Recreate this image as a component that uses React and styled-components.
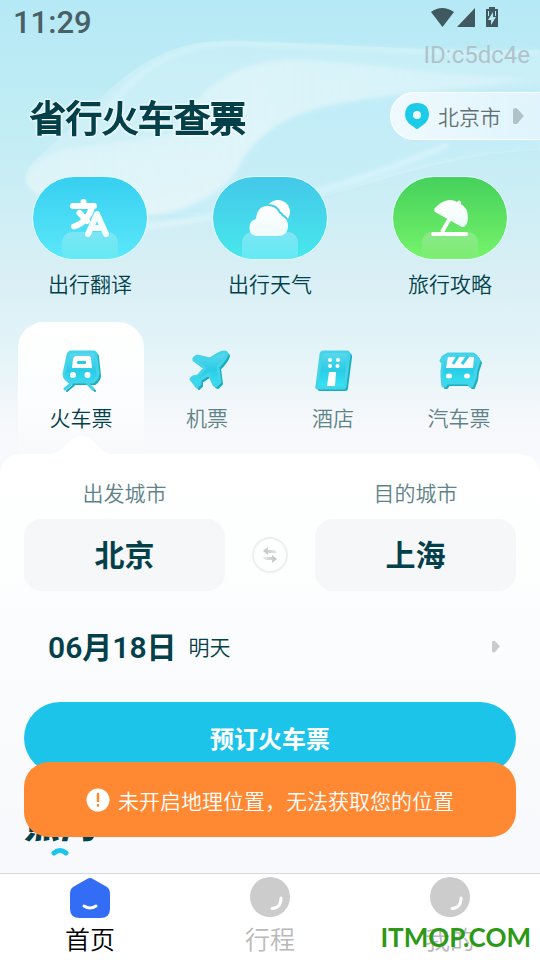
import React from "react";
import styled, { createGlobalStyle } from "styled-components";

const GlobalStyle = createGlobalStyle`
  * { box-sizing: border-box; }
  body {
    margin: 0;
    background: #f7f9fc;
    color: #04404a;
    font-family: Roboto, "Noto Sans CJK SC", sans-serif;
    font-weight: 350;
  }
  button { font: inherit; color: inherit; border: 0; padding: 0; background: none; cursor: pointer; }
  a { color: inherit; text-decoration: none; }
  h1, h2, p { margin: 0; }
  svg { display: block; flex: none; }
`;

const Page = styled.div`
  position: relative;
  min-height: 100vh;
  display: flex;
  flex-direction: column;
  overflow: hidden;
`;

const Main = styled.main`
  position: relative;
  flex: 1;
  display: flex;
  flex-direction: column;
`;

const Hero = styled.div`
  position: relative;
  background: linear-gradient(180deg, #b5e9f5 0%, #c3edf5 30%, #d8eff5 60%, #e4f4f8 78%, #f6f8fb 93%, #f7f9fc 100%);
`;

const Backdrop = styled.svg`
  position: absolute;
  top: 0;
  left: 0;
  width: 100%;
  height: 320px;
`;

const StatusBar = styled.div`
  position: relative;
  display: flex;
  justify-content: space-between;
  height: 44px;
  padding: 4px 41px 0 13px;
  color: #4a5f66;
`;

const Clock = styled.time`
  font-size: 31px;
  line-height: 38px;
  font-weight: 500;
`;

const DeviceId = styled.p`
  position: relative;
  padding-right: 10px;
  text-align: right;
  font-size: 24px;
  line-height: 22px;
  font-weight: 400;
  color: #afc3ca;
`;

const TitleRow = styled.header`
  position: relative;
  display: flex;
  justify-content: space-between;
  align-items: center;
  margin-top: 26px;
  padding-left: 30px;
  height: 48px;
`;

const Title = styled.h1`
  padding-top: 8px;
  font-size: 36px;
  line-height: 48px;
  font-weight: 350;
  -webkit-text-stroke: 2px #04404a;
  stroke-linejoin: round;
  filter: drop-shadow(0 0 1px #fff) drop-shadow(0 0 1px #fff);
`;

const LocationButton = styled.button`
  display: flex;
  align-items: center;
  width: 150px;
  height: 48px;
  border-radius: 24px 0 0 24px;
  && {
    padding-left: 14px;
    border: 1px solid #fff;
    border-right: 0;
    background: linear-gradient(90deg, #effaff, #dff4fc);
    color: #666f73;
    font-size: 21px;
  }
  svg + span { margin: 0 12px 0 9px; }
`;

const Features = styled.nav`
  position: relative;
  display: grid;
  grid-template-columns: repeat(3, 1fr);
  margin-top: 36px;
`;

const Feature = styled.a`
  display: flex;
  flex-direction: column;
  align-items: center;
  gap: 9px;
  font-size: 21px;
  line-height: 32px;
`;

const FeatureArt = styled.div`
  width: 116px;
  height: 84px;
  border: 1px solid #e4fbff;
  border-radius: 42px;
  overflow: hidden;
  background: linear-gradient(180deg, ${(p) => p.$from}, ${(p) => p.$to});
`;

const Tabs = styled.div`
  position: relative;
  display: grid;
  grid-template-columns: repeat(4, 1fr);
  margin-top: 21px;
  padding: 0 18px;
`;

const Tab = styled.button`
  position: relative;
  display: flex;
  flex-direction: column;
  align-items: center;
  height: 132px;
  border-radius: 26px 26px 0 0;
  && {
    padding-top: 25px;
    font-size: 21px;
    line-height: 32px;
    color: ${(p) => (p.$active ? "#04404a" : "#5f8388")};
    background: ${(p) => (p.$active ? "linear-gradient(180deg, #ffffff 0%, #fbfdfe 60%, #f7f9fc 100%)" : "none")};
  }
  > span { margin-top: 8px; position: relative; z-index: 1; }
`;

const TabNotch = styled.svg`
  position: absolute;
  left: 50%;
  bottom: 0;
  transform: translateX(-50%);
`;

const Sheet = styled.div`
  flex: 1;
  padding: 24px 24px 0;
  border-radius: 20px 20px 0 0;
  background: linear-gradient(180deg, #ffffff 0, #fdfefe 100px, #f8fafc 300px, #f7f9fc 100%);
`;

const RouteForm = styled.div`
  display: grid;
  grid-template-columns: 1fr 90px 1fr;
  align-items: end;
`;

const City = styled.label`
  display: flex;
  flex-direction: column;
  align-items: center;
  gap: 9px;
  font-size: 21px;
  line-height: 32px;
  color: #5f8388;
`;

const CityButton = styled.button`
  width: 100%;
  height: 72px;
  border-radius: 18px;
  && {
    padding-top: 2px;
    background: #f6f7f9;
    color: #04404a;
    font-size: 30px;
    font-weight: 700;
  }
`;

const SwapButton = styled.button`
  justify-self: center;
  margin-bottom: 18px;
  width: 36px;
  height: 36px;
  border-radius: 50%;
  display: grid;
  place-items: center;
  && { border: 2px solid #eeefef; }
`;

const DateButton = styled.button`
  display: flex;
  align-items: center;
  width: 100%;
  height: 48px;
  margin-top: 32px;
  text-align: left;
  && { padding: 0 16px 2px 24px; }
  strong { padding-bottom: 2px; font-size: 30px; font-weight: 600; }
  span { flex: 1; margin-left: 12px; font-size: 21px; }
`;

const BookButton = styled.button`
  width: 100%;
  height: 72px;
  margin-top: 31px;
  border-radius: 36px;
  && {
    padding-bottom: 2px;
    background: #1dc4e9;
    color: #fff;
    font-size: 24px;
    font-weight: 700;
  }
`;

const Section = styled.section`
  display: flex;
  flex-direction: column;
  align-items: flex-start;
  margin-top: 32px;
  svg { margin-left: 26px; }
`;

const SectionTitle = styled.h2`
  font-size: 36px;
  line-height: 40px;
  font-style: italic;
  font-weight: 900;
`;

const Toast = styled.div`
  position: absolute;
  left: 24px;
  right: 24px;
  bottom: 36px;
  height: 75px;
  display: flex;
  align-items: center;
  justify-content: center;
  gap: 8px;
  border-radius: 25px;
  background: #ff8832;
  color: #fff;
  font-size: 21px;
`;

const BottomNav = styled.nav`
  display: grid;
  grid-template-columns: repeat(3, 1fr);
  height: 87px;
  border-top: 1px solid #d8d9da;
  background: #fff;
`;

const NavLink = styled.a`
  display: flex;
  flex-direction: column;
  align-items: center;
  padding-top: 3px;
  font-size: 25px;
  line-height: 36px;
  color: ${(p) => (p.$active ? "#000" : "#b9b9b9")};
  span { margin-top: 4px; }
`;

const Watermark = styled.div`
  position: absolute;
  right: 9px;
  bottom: 6px;
  font-family: Lato, "Open Sans", sans-serif;
  font-size: 26px;
  line-height: 34px;
  font-weight: 700;
  color: #2c9916;
`;

const Arrow = ({ large }) => (
  <svg width={large ? 11 : 8} height={large ? 16 : 13} viewBox="0 0 11 16" fill={large ? "#b1c2c8" : "#c9cbcc"} aria-hidden="true">
    <path d="M0 2Q0 0 3 0Q4 0 10 7Q11 8 10 9L4 16Q0 17 0 14Z" />
  </svg>
);

const StatusIcons = () => (
  <svg width="68" height="24" viewBox="431 4 68 24" fill="#405961" aria-hidden="true">
    <path d="M431 12Q442 4 454 12L442.500 27ZM457 27L475 8V27Z" />
    <path fillRule="evenodd" d="M489 7h6v2h3v18h-12V9h3ZM493 12L488 20H491V25L496 17H493Z" />
    <path d="M488.500 11v5M495.500 11v5" stroke="#b5e8f4" strokeWidth="1" />
  </svg>
);

const cloudShape = "M258 236Q249 236 249.500 227Q250 220 256 219Q257 206 268 206Q276 206 279 213Q281 214 282 216Q288 219 288 226Q288 236 277 236Z";

const featureIcons = {
  translate: (
    <svg width="114" height="82" viewBox="33 177 114 82" aria-hidden="true">
      <rect x="62" y="232" width="56" height="32" rx="10" fill="url(#pedestal)" />
      <g fill="none" stroke="#fff" strokeWidth="6" strokeLinecap="round" strokeLinejoin="round">
        <path d="M83.500 202V206M73 206H94M92 207Q88 222 74 226.500M79.500 213L87 221" />
        <path d="M88 234L97 214L106 234M92 228H102" stroke="#f7fdff" />
      </g>
    </svg>
  ),
  weather: (
    <svg width="114" height="82" viewBox="213 177 114 82" aria-hidden="true">
      <clipPath id="sunOnly"><circle cx="278" cy="212" r="12" /></clipPath>
      <rect x="242" y="232" width="56" height="32" rx="10" fill="url(#pedestal)" />
      <circle cx="278" cy="212" r="12" fill="#fff" />
      <path d={cloudShape} fill="none" stroke="#43cfe9" strokeWidth="4" clipPath="url(#sunOnly)" />
      <path d={cloudShape} fill="url(#whiteFade)" />
    </svg>
  ),
  beach: (
    <svg width="114" height="82" viewBox="393 177 114 82" aria-hidden="true">
      <rect x="422" y="232" width="56" height="32" rx="10" fill="url(#pedestalGreen)" />
      <path d="M435 212Q433 209 436 207Q443 200 450 200Q454 200 457 202Q459 199 461 202V204Q468 208 468 218Q468 223 465 226Q463 228 460 226Z" fill="url(#whiteFade)" />
      <path d="M450 218L442 232" stroke="#fff" strokeWidth="4" />
      <path d="M433 234H466" stroke="#fff" strokeWidth="4" strokeLinecap="round" />
    </svg>
  ),
};

const trainBody = "M71 352H93Q96 352 96 355L98 374Q98 378 93 382H70Q64 379 64 374L68 355Q69 352 71 352ZM72 383L65 389M87 383L93 389";
const planeBody = "M218 354Q226 350 227 354Q226 359 218 367L220 382L216 386L214 385L209 374L200 380L200 384L197 387L194 383L191 379L193 377L198 376L205 368L194 360Q193 358 197 356L210 359Z";
const hotelBody = "M324 352H347Q349 352 349 355L345 386Q345 388 343 388H318Q316 388 317 386L321 355Q321 352 324 352Z";
const busBody = "M448 354H473L476 356L479 361L476 370L475 378L472 386H470L468 383H447L445 386H443L442 377V371L443 363L441 361L443 357Z";

const Raised = ({ d }) => (
  <g strokeLinejoin="round" strokeLinecap="round">
    <path d={d} transform="translate(2 2)" fill="#18aebd" stroke="#18aebd" strokeWidth="2" />
    <path d={d} fill="url(#cyanFace)" stroke="#45d3e9" strokeWidth="3" />
  </g>
);

const tabIcons = {
  train: (
    <svg width="48" height="48" viewBox="57 347 48 48" aria-hidden="true">
      <Raised d={trainBody} />
      <g fill="#fff">
        <path d="M76 356H88Q91 356 91 359L92 368H72L73 359Q74 356 76 356Z" />
        <circle cx="73" cy="375" r="3" /><circle cx="87.500" cy="375" r="3" />
      </g>
      <rect x="77" y="361" width="9" height="3" rx="1" fill="#27cae4" />
    </svg>
  ),
  plane: (
    <svg width="48" height="48" viewBox="183 347 48 48" aria-hidden="true"><Raised d={planeBody} /></svg>
  ),
  hotel: (
    <svg width="48" height="48" viewBox="309 347 48 48" aria-hidden="true">
      <Raised d={hotelBody} />
      <g fill="#fff">
        <circle cx="330" cy="360" r="2" /><circle cx="338" cy="360" r="2" />
        <circle cx="330" cy="366" r="2" /><circle cx="337.500" cy="366" r="2" />
        <path d="M329 372H336L335 386H327Z" />
      </g>
    </svg>
  ),
  bus: (
    <svg width="48" height="48" viewBox="435 347 48 48" aria-hidden="true">
      <Raised d={busBody} />
      <g fill="#fff">
        <path d="M448 357H474L473 368H446Z" />
        <ellipse cx="449" cy="376" rx="3" ry="2.500" /><ellipse cx="467" cy="376" rx="3" ry="2.500" />
      </g>
      <path d="M458 356L453 364M468 356L462 364" stroke="#32cbe1" strokeWidth="3" />
    </svg>
  ),
};

const features = [
  { label: "出行翻译", icon: "translate", from: "#37cff0", to: "#5be8fa" },
  { label: "出行天气", icon: "weather", from: "#43c8e9", to: "#47e8ec" },
  { label: "旅行攻略", icon: "beach", from: "#45d15c", to: "#76f36a" },
];

const tabs = [
  { label: "火车票", icon: "train", active: true },
  { label: "机票", icon: "plane" },
  { label: "酒店", icon: "hotel" },
  { label: "汽车票", icon: "bus" },
];

const HomeIcon = () => (
  <svg width="40" height="42" viewBox="0 -1 40 42" aria-hidden="true">
    <path d="M17 1Q20 -1 23 1L37 9Q40 11 40 16V31Q40 40 30 40H10Q0 40 0 31V16Q0 11 3 9Z" fill="#346df5" />
    <path d="M14 28Q20 32 26 28" fill="none" stroke="#fff" strokeWidth="3" strokeLinecap="round" />
  </svg>
);

const RoundIcon = () => (
  <svg width="40" height="42" viewBox="0 0 40 42" aria-hidden="true">
    <circle cx="20" cy="20" r="20" fill="#ccc" />
    <path d="M31 21Q31 31 22 31.500" fill="none" stroke="#fff" strokeWidth="3" strokeLinecap="round" />
  </svg>
);

export default function App() {
  return (
    <Page>
      <GlobalStyle />
      <Main>
        <Hero>
          <Backdrop viewBox="0 0 540 320" preserveAspectRatio="none" aria-hidden="true">
            <defs>
              <filter id="soft" x="-5%" y="-5%" width="110%" height="110%"><feGaussianBlur stdDeviation="2" /></filter>
              <linearGradient id="paleBand" x1="0" y1="0" x2="1" y2="0">
                <stop offset="0" stopColor="#fff" stopOpacity="0.22" />
                <stop offset="0.45" stopColor="#fff" stopOpacity="0.32" />
                <stop offset="1" stopColor="#fff" stopOpacity="0.2" />
              </linearGradient>
              <linearGradient id="pedestal" x1="0" y1="0" x2="0" y2="1">
                <stop offset="0" stopColor="#7de5f4" />
                <stop offset="1" stopColor="#5eebf5" />
              </linearGradient>
              <linearGradient id="pedestalGreen" x1="0" y1="0" x2="0" y2="1">
                <stop offset="0" stopColor="#8be88a" />
                <stop offset="1" stopColor="#79ef6d" />
              </linearGradient>
              <linearGradient id="whiteFade" x1="0" y1="0" x2="0" y2="1">
                <stop offset="0" stopColor="#fff" />
                <stop offset="1" stopColor="#eefbfb" />
              </linearGradient>
              <linearGradient id="cyanFace" x1="0" y1="0" x2="0" y2="1">
                <stop offset="0" stopColor="#5dd9ee" />
                <stop offset="0.5" stopColor="#2bcbe6" />
                <stop offset="1" stopColor="#34e6f3" />
              </linearGradient>
            </defs>
            <path d="M26 180Q24 168 40 156C110 95 140 36 241 41C350 44 430 52 540 50V150C430 155 350 195 270 210C190 222 30 212 26 180Z" fill="#fff" fillOpacity="0.2" />
            <path d="M26 180Q28 165 60 150L170 135C200 90 230 60 293 60C380 62 460 80 540 78C450 90 380 95 345 103C290 112 262 130 241 162C232 190 200 210 150 214C80 216 30 205 26 180Z" fill="url(#paleBand)" filter="url(#soft)" />
            <path d="M241 162C262 130 290 112 345 103C400 93 480 92 540 84V150C470 152 400 165 330 195C290 210 230 218 150 220C200 205 232 185 241 162Z" fill="#b0e9f9" opacity="0.35" filter="url(#soft)" />
            <path d="M105 110C145 62 185 42 241 43C350 48 440 54 540 52" fill="none" stroke="#e5fafa" strokeWidth="4" opacity="0.4" filter="url(#soft)" />
            <path d="M120 230C250 215 340 190 448 145" fill="none" stroke="#edfaff" strokeWidth="6" opacity="0.45" filter="url(#soft)" />
          </Backdrop>
          <StatusBar>
            <Clock>11:29</Clock>
            <StatusIcons />
          </StatusBar>
          <DeviceId>ID:c5dc4e</DeviceId>
          <TitleRow>
            <Title>省行火车查票</Title>
            <LocationButton type="button">
              <svg width="24" height="27" viewBox="0 0 24 27" aria-hidden="true">
                <path fillRule="evenodd" d="M12 0Q23 0 24 11Q24 18 18 22Q15 24 14 25Q12 27 10 25Q9 24 6 22Q0 18 0 11Q1 0 12 0ZM12 8A4 4 0 1 0 12 16A4 4 0 1 0 12 8Z" fill="#1ccbe8" />
              </svg>
              <span>北京市</span>
              <Arrow large />
            </LocationButton>
          </TitleRow>
          <Features aria-label="出行服务">
            {features.map((f) => (
              <Feature href="#" key={f.label}>
                <FeatureArt $from={f.from} $to={f.to}>{featureIcons[f.icon]}</FeatureArt>
                <span>{f.label}</span>
              </Feature>
            ))}
          </Features>
          <Tabs role="tablist">
            {tabs.map((t) => (
              <Tab type="button" role="tab" aria-selected={!!t.active} $active={t.active} key={t.label}>
                {tabIcons[t.icon]}
                {t.active && (
                  <TabNotch width="60" height="18" viewBox="0 0 60 18" aria-hidden="true">
                    <path d="M0 18C12 18 16 0 30 0S48 18 60 18Z" fill="#fff" />
                  </TabNotch>
                )}
                <span>{t.label}</span>
              </Tab>
            ))}
          </Tabs>
        </Hero>
        <Sheet>
          <RouteForm>
            <City>出发城市<CityButton type="button">北京</CityButton></City>
            <SwapButton type="button" aria-label="交换城市">
              <svg width="16" height="18" viewBox="0 0 16 18" aria-hidden="true">
                <defs>
                  <linearGradient id="swapLeft"><stop offset="0" stopColor="#bfc1c1" /><stop offset="1" stopColor="#e9eaea" /></linearGradient>
                  <linearGradient id="swapRight"><stop offset="0" stopColor="#e9eaea" /><stop offset="1" stopColor="#bfc1c1" /></linearGradient>
                </defs>
                <path d="M1 5L6 1V4H11Q14 4 15 7H6V9Z" fill="url(#swapLeft)" />
                <path d="M15 13L10 9V11H1Q2 14 5 14H10V17Z" fill="url(#swapRight)" />
              </svg>
            </SwapButton>
            <City>目的城市<CityButton type="button">上海</CityButton></City>
          </RouteForm>
          <DateButton type="button">
            <strong>06月18日</strong>
            <span>明天</span>
            <Arrow />
          </DateButton>
          <BookButton type="button">预订火车票</BookButton>
          <Section>
            <SectionTitle>热门</SectionTitle>
            <svg width="20" height="12" viewBox="0 0 20 12" aria-hidden="true">
              <path d="M4 7Q10 2 16 7" fill="none" stroke="#1dc4e9" strokeWidth="5" strokeLinecap="round" />
            </svg>
          </Section>
        </Sheet>
        <Toast role="alert">
          <svg width="24" height="24" viewBox="0 0 24 24" aria-hidden="true">
            <circle cx="12" cy="12" r="11.500" fill="#fff" />
            <path d="M12 6V13M12 17V17.500" stroke="#ff8832" strokeWidth="2.500" strokeLinecap="round" />
          </svg>
          <span>未开启地理位置，无法获取您的位置</span>
        </Toast>
      </Main>
      <BottomNav aria-label="主导航">
        <NavLink href="#" $active><HomeIcon /><span>首页</span></NavLink>
        <NavLink href="#"><RoundIcon /><span>行程</span></NavLink>
        <NavLink href="#"><RoundIcon /><span>我的</span></NavLink>
      </BottomNav>
      <Watermark>ITMOP.COM</Watermark>
    </Page>
  );
}
